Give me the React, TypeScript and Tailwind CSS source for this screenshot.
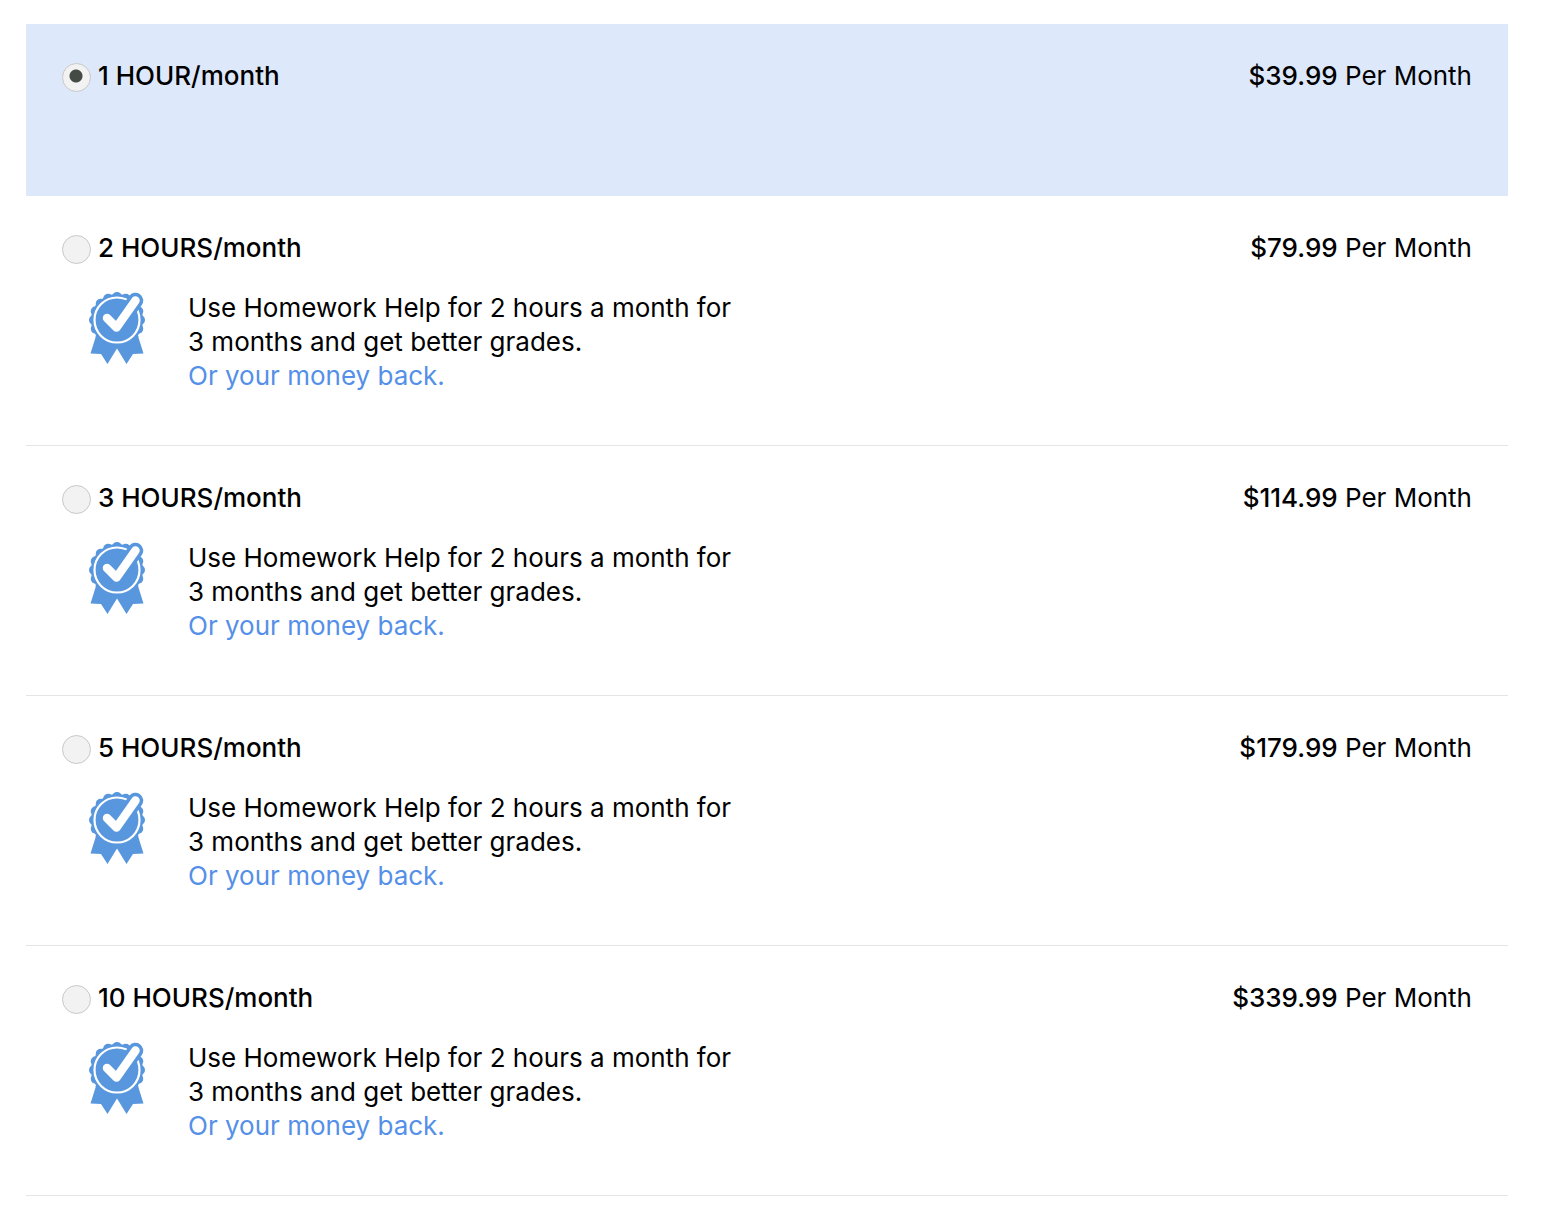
import { useState } from "react";

const plans = [
  { id: "1", title: "1 HOUR/month", price: "$39.99", guarantee: false },
  { id: "2", title: "2 HOURS/month", price: "$79.99", guarantee: true },
  { id: "3", title: "3 HOURS/month", price: "$114.99", guarantee: true },
  { id: "5", title: "5 HOURS/month", price: "$179.99", guarantee: true },
  { id: "10", title: "10 HOURS/month", price: "$339.99", guarantee: true },
];

function Badge() {
  const bumps = Array.from({ length: 16 }, (_, i) => {
    const a = (i * Math.PI) / 8;
    return { cx: 28 + 23 * Math.cos(a), cy: 28 + 23 * Math.sin(a) };
  });
  return (
    <svg viewBox="0 0 56 72" className="mt-px h-[72px] w-14 shrink-0" aria-hidden="true">
      <g fill="#5897dd">
        <path d="M7 44 1.5 61.5 12 62 18.5 72 28 56.5 37.5 72 44 62 54.5 61.5 49 44Z" />
        {bumps.map((b, i) => (
          <circle key={i} cx={b.cx} cy={b.cy} r="5" />
        ))}
        <circle cx="28" cy="28" r="26" />
      </g>
      <circle cx="28" cy="28" r="22.5" fill="none" stroke="#fff" strokeWidth="2.2" />
      <g fill="none" strokeLinecap="round" strokeLinejoin="round">
        <path d="M18 26 27.5 35.5 46.5 8.5" stroke="#5897dd" strokeWidth="15.5" />
        <path d="M18 26 27.5 35.5 46.5 8.5" stroke="#fff" strokeWidth="8.5" />
      </g>
    </svg>
  );
}

export default function App() {
  const [selected, setSelected] = useState("1");
  return (
    <main className="bg-white pt-6 pr-9 pl-[26px] font-['Inter',sans-serif] text-[26px] leading-[34px] text-black">
      {plans.map((p) => (
        <section
          key={p.id}
          className={
            "px-9 pt-9 " +
            (p.guarantee ? "border-b border-[#e5e5e5] pb-[52px] " : "pb-[104px] ") +
            (selected === p.id ? "bg-[#dde8fa]" : "bg-white")
          }
        >
          <div className="flex justify-between leading-8">
            <label className="flex items-start gap-[7px] font-medium">
              <input
                type="radio"
                name="plan"
                value={p.id}
                checked={selected === p.id}
                onChange={() => setSelected(p.id)}
                className="mt-[3px] size-[29px] appearance-none rounded-full border border-[#c8c8c8] bg-[#f2f2f2] checked:bg-[radial-gradient(circle_at_13px_12px,#444a44_6px,transparent_7px)]"
              />
              {p.title}
            </label>
            <p>
              <span className="font-medium">{p.price}</span> Per Month
            </p>
          </div>
          {p.guarantee && (
            <div className="mt-[27px] flex items-start gap-[43px] pl-[27px]">
              <Badge />
              <p>
                Use Homework Help for 2 hours a month for
                <br />3 months and get better grades.
                <br />
                <span className="text-[#5590e8]">Or your money back.</span>
              </p>
            </div>
          )}
        </section>
      ))}
    </main>
  );
}
